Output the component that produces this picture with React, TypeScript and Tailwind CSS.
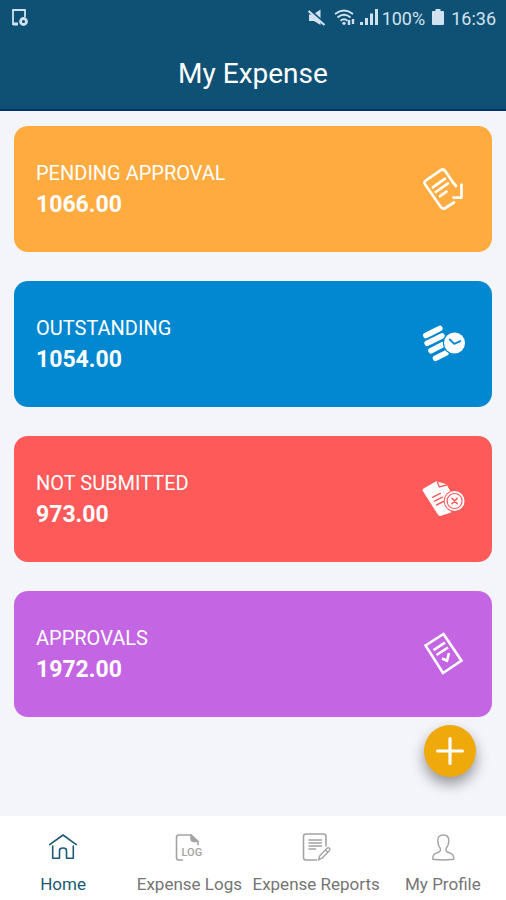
import React from 'react'

type CardProps = {
  label: string
  amount: string
  color: string
  icon: React.ReactNode
}

type TabProps = {
  label: string
  icon: React.ReactNode
  active?: boolean
}

const PendingIcon = () => (
  <svg viewBox="0 0 44 44" className="size-11" fill="none" stroke="currentColor" strokeWidth="2.7" strokeLinecap="round" strokeLinejoin="round">
    <path d="M31 15.500 23.200 4.100Q21.300 1.500 18.800 3.200L4 13.400Q1.500 15 3.200 17.500L18.800 40Q20.800 42.600 23.300 41L32 35.500" />
    <path d="M39.500 17.500V30.600H31.500M31 15.500 34 19" />
    <path d="m10.800 20.300 12.200-8.600M13.800 25l12.200-8.600M18 29.200l6.500-4.600" />
  </svg>
)

const OutstandingIcon = () => (
  <svg viewBox="0 0 44 44" className="size-11">
    <path d="m3.800 13.500 14-7M5.200 21.300 20 14M9 28.800 21 22.600M13.500 36.300l10.500-5.200" stroke="currentColor" strokeWidth="5.600" strokeLinecap="round" />
    <circle cx="32.500" cy="21" r="11.600" fill="#0288d1" />
    <circle cx="32.500" cy="21" r="10.500" fill="currentColor" />
    <path d="m27.800 17.500 4.400 4.300 6.200-2.600" fill="none" stroke="#0288d1" strokeWidth="1.800" strokeLinecap="round" strokeLinejoin="round" />
  </svg>
)

const NotSubmittedIcon = () => (
  <svg viewBox="0 0 44 44" className="size-11">
    <path d="M2 11.200 14.200 4.300l10.300 3 6.500 12L29 35.500l-10 3.300q-2 .8-3.200-1.200L.8 14Q0 12.300 2 11.200Z" fill="currentColor" />
    <path d="m15.300 4.800 2 5.200 7.200-2M10.500 20.300l7.800-4M12.500 24.200l8-4M14.500 28l7-3.500" fill="none" stroke="#ff5a5a" strokeWidth="1.400" strokeLinecap="round" />
    <circle cx="32.600" cy="24" r="10.800" fill="#ff5a5a" />
    <circle cx="32.600" cy="24" r="10" fill="currentColor" />
    <circle cx="32.600" cy="24" r="7.500" fill="none" stroke="#ff5a5a" strokeWidth="1.200" />
    <path d="m30 21.400 5.200 5.200M35.200 21.400 30 26.600" stroke="#ff5a5a" strokeWidth="1.500" strokeLinecap="round" />
  </svg>
)

const ApprovalsIcon = () => (
  <svg viewBox="0 0 44 44" className="size-11" fill="none" stroke="currentColor" strokeWidth="2.600">
    <path d="M3.500 13.500 21.500 2 39.500 28.700 21 41Z" />
    <path d="m11.500 18.200 11.500-7.500M14.500 23l11.500-7.500" />
    <path d="m20 26.500 5 2.200 2-7.700" />
  </svg>
)

const HomeIcon = () => (
  <svg viewBox="0 0 30 30" className="size-[30px]" fill="none" stroke="currentColor" strokeWidth="1.600" strokeLinecap="round" strokeLinejoin="round">
    <path d="M1.700 12.600 15 3l13.300 9.600" />
    <path d="M4.700 14v12.200h6.800v-7.700q0-2.500 3.500-2.500t3.500 2.500v7.700h6.800V14" />
  </svg>
)

const LogIcon = () => (
  <svg viewBox="0 0 30 30" className="size-[30px]" fill="none" stroke="currentColor" strokeWidth="1.600" strokeLinecap="round" strokeLinejoin="round">
    <path d="M8.500 28H5Q2.500 28 2.500 25.500V5.500Q2.500 3 5 3H17l7 6.500v3" />
    <path d="M17 3v3.500q0 3 3 3h4Z" fill="currentColor" />
    <text x="7.500" y="24" fontFamily="Roboto, sans-serif" fontSize="11" fontWeight="500" fill="currentColor" stroke="none">LOG</text>
  </svg>
)

const ReportIcon = () => (
  <svg viewBox="0 0 30 30" className="size-[30px]" fill="none" stroke="currentColor" strokeWidth="1.600" strokeLinecap="round" strokeLinejoin="round">
    <path d="M15.500 28H5Q2.500 28 2.500 25.500V4.500Q2.500 2 5 2H22.500q2.500 0 2.500 2.500V14" />
    <path d="M8 8h12.500M8 11h12.500M8 14h12.500M8 17h6.500" />
    <path d="m17.500 28 1.300-4.300 7.200-7.400q1.200-1 2.300 0t0 2.400L21 26.200ZM24.500 18l2.300 2.200" strokeWidth="1.400" />
  </svg>
)

const ProfileIcon = () => (
  <svg viewBox="0 0 30 30" className="size-[30px]" fill="none" stroke="currentColor" strokeWidth="1.400" strokeLinejoin="round">
    <path d="M12.300 18.500v-2.300Q9.800 13.500 9.800 8.500 9.800 3 15.300 3t5.500 5.500q0 5-2.700 7.700v2.300q0 1 1.300 1.500l3.500 1.400Q26 23 25.700 27.300 20 28 15.200 28T4.800 27.300Q4.500 23 7.700 21.400L11 20q1.300-.5 1.300-1.500Z" />
  </svg>
)

const CARDS: CardProps[] = [
  { label: 'PENDING APPROVAL', amount: '1066.00', color: 'bg-[#ffab40]', icon: <PendingIcon /> },
  { label: 'OUTSTANDING', amount: '1054.00', color: 'bg-[#0288d1]', icon: <OutstandingIcon /> },
  { label: 'NOT SUBMITTED', amount: '973.00', color: 'bg-[#ff5a5a]', icon: <NotSubmittedIcon /> },
  { label: 'APPROVALS', amount: '1972.00', color: 'bg-[#c465e3]', icon: <ApprovalsIcon /> },
]

const TABS: TabProps[] = [
  { label: 'Home', icon: <HomeIcon />, active: true },
  { label: 'Expense Logs', icon: <LogIcon /> },
  { label: 'Expense Reports', icon: <ReportIcon /> },
  { label: 'My Profile', icon: <ProfileIcon /> },
]

const StatusBar = () => (
  <div className="flex h-9 items-center justify-between px-2.5 text-[18px] text-[#cfe2ee]">
    <svg viewBox="0 0 20 20" className="size-5" fill="none" stroke="currentColor" strokeWidth="1.800">
      <path d="M8 16H3V2h12v7" />
      <path d="M3 16h5" strokeWidth="3" />
      <circle cx="13.500" cy="13.500" r="3" strokeWidth="2.800" />
    </svg>
    <div className="flex items-center gap-1">
      <svg viewBox="0 0 20 20" className="mr-1 size-5" fill="currentColor">
        <path d="M3 6.500h4L14.500 1.500V17L8 13H3Z" />
        <path d="M3.500 1.500 19 15.500" stroke="#0f5075" strokeWidth="2" />
        <path d="M2.500 3 18.500 17" stroke="currentColor" strokeWidth="2.200" />
      </svg>
      <svg viewBox="0 0 22 20" className="h-5 w-[22px]" fill="none" stroke="currentColor" strokeWidth="1.900">
        <path d="M1 6q9-7 18 0M3.500 9.500q6.500-5.500 13 0M6.500 12.800q3.500-3 7 0" />
        <circle cx="10" cy="15.300" r="1.600" fill="currentColor" stroke="none" />
        <path d="M15 12v5M19 11v5" strokeWidth="2.400" />
      </svg>
      <svg viewBox="0 0 18 20" className="h-5 w-[18px]" fill="currentColor">
        <path d="M0 14h3v3H0ZM5 10h3v7H5ZM10 5.500h3V17h-3ZM15 1h3v16h-3Z" />
      </svg>
      <span>100%</span>
      <svg viewBox="0 0 14 20" className="mx-0.5 h-5 w-3.5" fill="currentColor">
        <path d="M4.500 1h5v2H12q1 0 1 1v12q0 1-1 1H2q-1 0-1-1V4q0-1 1-1h2.500Z" />
      </svg>
      <span>16:36</span>
    </div>
  </div>
)

const Card = ({ label, amount, color, icon }: CardProps) => (
  <section className={`${color} flex h-[126px] items-center justify-between rounded-[14px] pr-[26px] pl-[22px] text-white`}>
    <div>
      <h2 className="text-[20px] leading-8">{label}</h2>
      <p className="text-[23px] leading-8 font-bold">{amount}</p>
    </div>
    {icon}
  </section>
)

const Tab = ({ label, icon, active }: TabProps) => (
  <a
    href="#"
    aria-current={active ? 'page' : undefined}
    className={`flex flex-1 flex-col items-center gap-2.5 pt-4 text-[17px] leading-6 whitespace-nowrap ${active ? 'text-[#1b5a74]' : 'text-[#757575]'}`}
  >
    <span className={active ? '' : 'text-[#a3a3a3]'}>{icon}</span>
    {label}
  </a>
)

const App = () => {
  return (
    <div className="flex min-h-screen flex-col bg-[#f4f5fb] font-[Roboto,sans-serif]">
      <header className="border-b-2 border-[#063468] bg-[#0f5075]">
        <StatusBar />
        <h1 className="pt-[18px] pb-[15px] text-center text-[28px] leading-10 text-white">My Expense</h1>
      </header>

      <main className="relative flex flex-1 flex-col gap-[29px] px-3.5 pt-[15px] pb-[99px]">
        {CARDS.map((card) => (
          <Card key={card.label} {...card} />
        ))}
        <button
          aria-label="Add expense"
          className="absolute right-[30px] bottom-[39px] flex size-[52px] items-center justify-center rounded-full bg-[#efa90a] text-white shadow-[0_7px_14px_rgba(0,0,0,0.4)]"
        >
          <svg viewBox="0 0 28 28" className="size-7" stroke="currentColor" strokeWidth="3.200" strokeLinecap="round">
            <path d="M14 1.600v24.800M1.600 14h24.800" />
          </svg>
        </button>
      </main>

      <nav className="flex h-[84px] bg-white">
        {TABS.map((tab) => (
          <Tab key={tab.label} {...tab} />
        ))}
      </nav>
    </div>
  )
}

export default App
